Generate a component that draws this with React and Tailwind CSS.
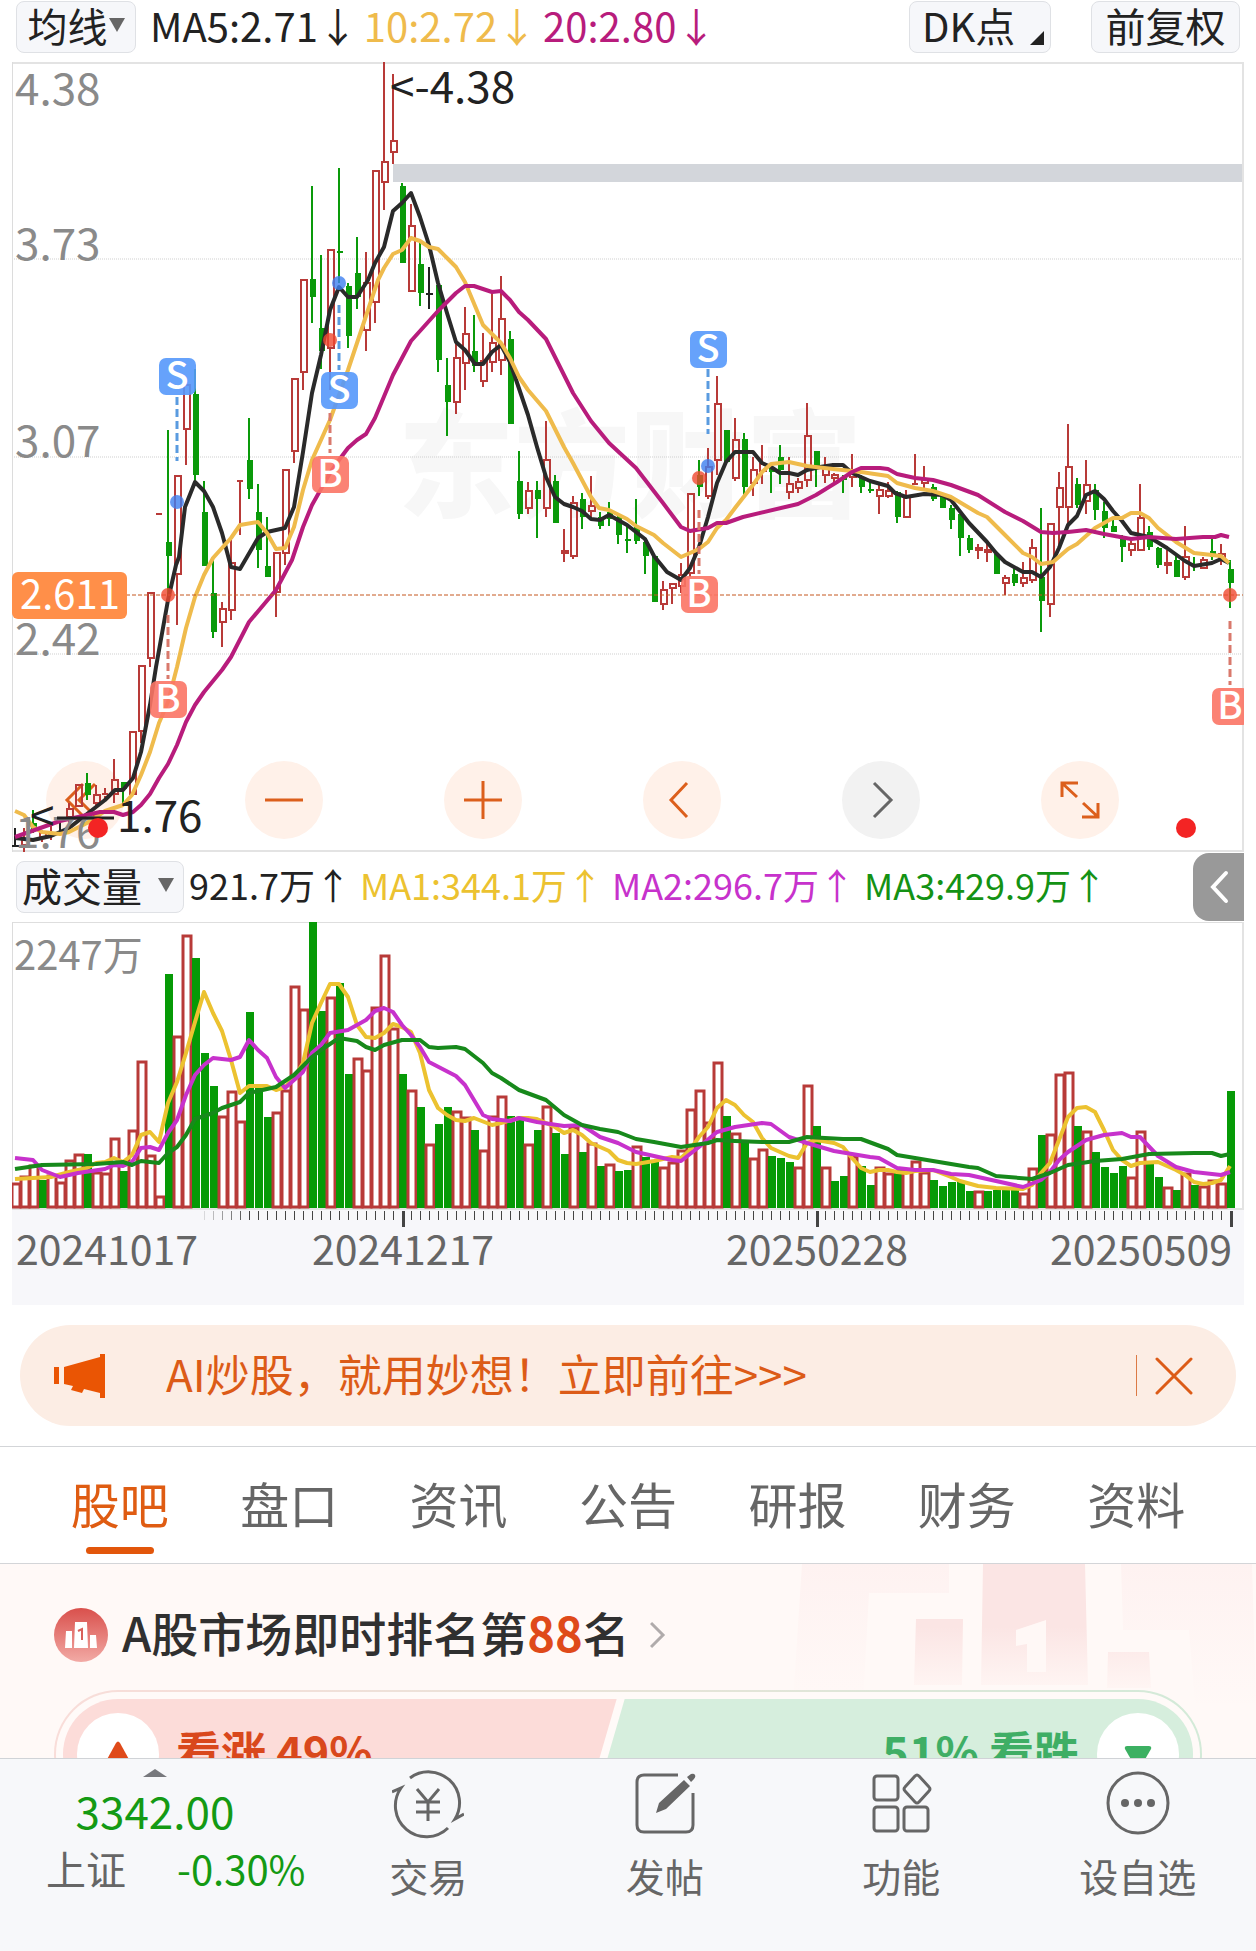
import React from "react";

const FONT = "font-['Noto_Sans_CJK_SC','Noto_Sans',sans-serif]";
const RED = "#b83a38";
const GREEN = "#0a9a0a";

const xAt = (i) => 15 + 9 * i;

// kind, high, body top, body bottom, low
const CANDLES = [
  ["k", 828, 845, 846, 846], ["r", 828, 838, 846, 852], ["g", 810, 823, 831, 833], ["r", 830, 832, 838, 842],
  ["r", 825, 832, 836, 840], ["k", 817, 831, 832, 833], ["r", 803, 808, 818, 823], ["r", 784, 784, 807, 807],
  ["g", 773, 783, 795, 800], ["r", 785, 794, 804, 806], ["r", 788, 793, 796, 800], ["r", 759, 779, 795, 803],
  ["g", 782, 782, 789, 805], ["r", 731, 731, 795, 795], ["r", 665, 665, 732, 743], ["r", 592, 592, 659, 667],
  ["r", 514, 513, 515, 514], ["g", 430, 542, 556, 595], ["r", 475, 475, 575, 625], ["r", 384, 384, 430, 465],
  ["g", 369, 394, 475, 481], ["g", 481, 512, 566, 566], ["g", 558, 593, 632, 638], ["r", 602, 608, 623, 647],
  ["r", 537, 562, 611, 620], ["r", 481, 480, 482, 535], ["g", 418, 460, 489, 499], ["g", 484, 512, 550, 568],
  ["g", 517, 566, 577, 577], ["r", 552, 552, 593, 617], ["r", 469, 469, 554, 565], ["r", 378, 378, 452, 463],
  ["r", 279, 279, 373, 390], ["g", 186, 279, 297, 323], ["g", 255, 328, 351, 369], ["r", 249, 249, 349, 390],
  ["g", 168, 251, 253, 283], ["g", 283, 286, 336, 348], ["g", 237, 273, 297, 309], ["r", 252, 282, 331, 351],
  ["r", 170, 170, 303, 323], ["r", 62, 161, 183, 210], ["r", 74, 140, 153, 164], ["g", 183, 186, 263, 263],
  ["r", 204, 225, 292, 292], ["g", 242, 264, 293, 306], ["k", 267, 293, 295, 309], ["g", 285, 285, 360, 372],
  ["g", 358, 385, 402, 436], ["r", 342, 357, 403, 414], ["r", 307, 333, 364, 390], ["g", 315, 351, 366, 372],
  ["r", 333, 360, 382, 387], ["r", 292, 342, 363, 372], ["r", 276, 318, 361, 375], ["g", 331, 339, 424, 424],
  ["g", 451, 481, 514, 519], ["r", 482, 490, 509, 514], ["g", 481, 490, 499, 538], ["r", 421, 459, 509, 517],
  ["g", 475, 481, 523, 523], ["r", 529, 550, 554, 562], ["r", 496, 502, 557, 559], ["g", 493, 499, 517, 529],
  ["r", 476, 505, 512, 517], ["g", 512, 517, 526, 529], ["g", 502, 512, 519, 526], ["g", 515, 517, 535, 544],
  ["g", 525, 539, 541, 553], ["g", 499, 527, 541, 544], ["g", 541, 542, 556, 574], ["g", 556, 556, 602, 602],
  ["r", 581, 589, 605, 610], ["r", 583, 583, 589, 604], ["r", 563, 574, 587, 593], ["r", 493, 493, 574, 577],
  ["g", 460, 475, 487, 496], ["r", 448, 466, 497, 499], ["r", 376, 403, 461, 475], ["g", 430, 430, 462, 462],
  ["r", 418, 439, 479, 481], ["g", 433, 439, 487, 496], ["r", 457, 469, 484, 496], ["r", 445, 463, 472, 484],
  ["g", 463, 467, 472, 493], ["g", 445, 457, 470, 484], ["r", 457, 483, 493, 499], ["r", 478, 481, 489, 493],
  ["r", 403, 435, 481, 487], ["g", 451, 451, 467, 487], ["r", 457, 467, 476, 483], ["r", 473, 474, 479, 483],
  ["g", 475, 477, 480, 493], ["r", 454, 473, 478, 487], ["g", 475, 477, 487, 493], ["g", 482, 489, 491, 493],
  ["r", 483, 489, 497, 514], ["r", 482, 490, 497, 498], ["g", 491, 492, 517, 523], ["r", 490, 495, 518, 518],
  ["r", 454, 483, 485, 485], ["r", 466, 479, 484, 488], ["g", 484, 487, 499, 501], ["g", 493, 494, 508, 508],
  ["g", 505, 508, 520, 529], ["g", 514, 514, 538, 556], ["g", 535, 538, 550, 553], ["r", 544, 547, 551, 559],
  ["r", 542, 549, 553, 562], ["g", 554, 554, 574, 574], ["r", 575, 577, 584, 595], ["g", 568, 574, 583, 586],
  ["r", 562, 577, 584, 587], ["r", 539, 547, 581, 583], ["g", 508, 577, 601, 632], ["r", 523, 523, 605, 617],
  ["r", 472, 487, 508, 547], ["r", 424, 466, 508, 523], ["g", 478, 484, 505, 508], ["r", 460, 484, 502, 514],
  ["g", 484, 490, 510, 520], ["g", 502, 511, 528, 538], ["g", 518, 526, 532, 532], ["g", 535, 536, 547, 562],
  ["r", 541, 543, 551, 556], ["r", 484, 517, 551, 551], ["g", 526, 532, 547, 550], ["g", 547, 548, 565, 568],
  ["r", 550, 562, 566, 574], ["g", 553, 560, 577, 577], ["r", 526, 556, 578, 580], ["g", 557, 565, 567, 571],
  ["r", 557, 559, 569, 569], ["g", 539, 551, 557, 560], ["r", 544, 553, 558, 565], ["g", 560, 569, 583, 608],
];

const MA5 =
  "15,838 33,840 51,836 69,828 87,814 105,800 115,790 123,790 133,778 141,752 150,705 156,667 168,600 176,565 179,557 185,507 195,482 204,491 213,507 222,533 231,567 240,569 258,538 267,532 285,528 294,507 303,452 312,393 321,355 330,310 339,287 348,297 357,297 368,280 375,263 384,247 393,211 402,203 411,193 420,217 429,245 438,283 447,313 456,342 465,350 475,364 483,364 492,352 501,345 510,362 528,415 537,447 546,477 555,497 564,504 573,507 582,511 591,519 600,520 609,515 627,525 645,539 654,556 667,572 681,580 690,568 699,547 708,517 717,483 726,462 735,452 753,452 762,463 771,467 780,473 789,473 798,475 807,470 820,467 833,465 843,465 852,473 870,481 888,486 895,493 906,497 924,494 942,495 951,500 969,523 987,542 996,553 1005,562 1023,572 1032,572 1041,577 1050,567 1059,548 1068,525 1077,516 1086,495 1095,491 1104,499 1113,511 1122,521 1131,533 1149,537 1167,548 1185,561 1194,566 1212,563 1221,559 1229,563";
const MA10 =
  "15,811 24,815 33,827 42,832 60,834 69,832 87,823 105,811 123,805 132,795 141,775 150,752 159,723 168,702 177,667 186,628 195,597 204,575 213,558 231,538 240,525 258,522 267,533 276,549 285,548 294,527 303,490 312,460 330,420 339,395 348,370 357,343 368,310 378,280 384,268 393,254 402,250 411,238 420,241 429,247 438,249 447,258 456,267 465,282 483,325 501,343 510,358 519,377 528,390 546,411 564,447 573,463 591,497 599,508 609,510 627,519 636,526 654,535 663,543 681,557 699,549 708,542 717,528 726,520 735,508 753,485 762,472 771,464 789,462 807,466 833,469 852,471 861,472 888,476 897,483 915,488 933,491 951,497 978,513 987,517 1005,535 1023,553 1032,557 1041,564 1053,562 1068,549 1077,544 1095,528 1113,518 1122,518 1131,513 1140,513 1149,518 1158,528 1176,542 1194,553 1221,556 1229,563";
const MA20 =
  "15,837 60,821 78,817 100,812 114,812 123,815 133,812 141,805 150,794 159,778 168,764 177,745 186,722 195,705 204,692 222,670 231,657 249,622 276,590 292,560 303,527 312,505 330,473 339,460 348,448 357,440 366,434 375,418 393,375 411,341 438,311 456,293 465,286 474,286 492,292 501,291 510,300 519,312 528,320 546,339 564,375 573,393 591,421 609,443 636,468 663,503 681,527 690,531 708,528 717,523 726,523 743,517 798,504 816,495 837,482 852,472 861,468 880,468 888,469 897,474 915,478 933,480 951,485 978,495 1005,512 1023,521 1041,532 1053,533 1068,532 1086,530 1104,534 1131,539 1149,537 1176,539 1203,537 1215,537 1221,535 1229,537";

// kind, height above the baseline
const VOLUME =
  "r25 r32 r43 g28 r33 r26 r48 r54 g54 r36 r35 r70 g37 r78 r147 r53 r12 g234 r172 r273 g250 g155 g122 r92 r117 r87 g196 g121 g91 r96 r118 r222 r199 g286 g197 r211 g225 g134 r150 r138 r201 r253 r180 g134 r118 g101 r64 g84 g101 r97 r91 g78 r58 r92 r112 g92 g90 r64 g78 r102 g75 g54 r81 g56 r65 g42 r44 g37 g38 r62 g51 g46 r41 r46 r58 r99 r118 r86 r146 g92 r75 g68 r50 r59 g52 g50 g46 r41 r123 g82 r41 g27 g32 r52 g42 g23 r41 r35 g38 r39 r47 r36 g28 g22 g26 g27 g17 r17 g17 g18 g20 g19 r15 r40 g73 r74 r134 r136 g82 r77 g56 g41 g35 g42 r31 r77 g44 g31 r21 g18 r35 g23 r22 r28 r25 g117".split(" ");

const VMA1 = [[0,1179],[2,1178],[4,1177],[6,1172],[8,1168],[9,1163],[10,1162],[11,1158],[12,1162],[13,1155],[14,1135],[15,1132],[16,1142],[17,1103],[18,1082],[19,1053],[20,1022],[21,992],[22,1013],[23,1031],[24,1060],[25,1093],[26,1086],[28,1086],[29,1090],[30,1087],[31,1078],[32,1063],[33,1023],[34,1003],[35,984],[36,984],[37,997],[38,1025],[39,1037],[40,1038],[41,1033],[42,1024],[43,1027],[44,1032],[45,1053],[46,1090],[47,1108],[48,1115],[49,1120],[50,1121],[51,1118],[53,1125],[54,1123],[56,1118],[57,1118],[58,1119],[59,1123],[60,1127],[61,1133],[62,1130],[63,1135],[64,1143],[66,1151],[67,1160],[68,1163],[69,1164],[71,1161],[73,1157],[74,1158],[75,1150],[76,1137],[77,1127],[78,1108],[79,1100],[80,1105],[81,1115],[82,1122],[83,1138],[84,1148],[86,1156],[87,1158],[88,1143],[89,1140],[91,1143],[92,1147],[93,1158],[94,1168],[95,1172],[96,1170],[97,1170],[98,1172],[99,1173],[100,1171],[102,1170],[104,1177],[105,1181],[107,1186],[109,1188],[112,1189],[113,1185],[114,1173],[115,1163],[116,1140],[117,1117],[118,1108],[119,1107],[120,1112],[121,1130],[122,1150],[123,1160],[124,1166],[125,1163],[127,1162],[129,1170],[130,1175],[131,1182],[132,1184],[133,1183],[134,1180],[135,1166]];
const VMA2 = [[0,1158],[2,1160],[3,1170],[5,1177],[7,1173],[10,1169],[11,1165],[12,1166],[13,1162],[14,1148],[15,1147],[16,1150],[17,1133],[18,1120],[19,1095],[20,1075],[21,1065],[22,1058],[24,1060],[25,1057],[26,1040],[27,1050],[28,1058],[29,1077],[30,1088],[31,1080],[32,1072],[33,1053],[34,1045],[35,1033],[37,1030],[39,1020],[40,1011],[41,1008],[42,1012],[43,1025],[44,1035],[45,1047],[46,1062],[49,1076],[50,1085],[52,1115],[53,1119],[55,1121],[56,1118],[58,1122],[61,1126],[63,1125],[65,1137],[67,1143],[69,1152],[70,1154],[71,1156],[73,1160],[74,1161],[76,1147],[78,1132],[80,1127],[83,1123],[84,1124],[86,1137],[88,1143],[91,1151],[93,1154],[95,1157],[96,1158],[98,1168],[100,1170],[102,1170],[104,1174],[106,1175],[112,1187],[114,1180],[115,1172],[116,1160],[117,1152],[119,1140],[121,1135],[123,1133],[124,1137],[125,1137],[127,1156],[129,1167],[131,1172],[134,1175],[135,1172]];
const VMA3 = [[0,1169],[3,1165],[9,1164],[12,1162],[13,1165],[14,1161],[16,1163],[17,1153],[18,1147],[19,1135],[20,1119],[22,1113],[23,1108],[25,1102],[26,1093],[29,1087],[31,1075],[33,1057],[34,1050],[36,1038],[38,1041],[39,1047],[40,1050],[41,1045],[43,1040],[45,1040],[46,1047],[47,1048],[49,1047],[50,1049],[52,1063],[53,1073],[54,1078],[56,1090],[59,1100],[61,1115],[63,1125],[65,1129],[67,1132],[69,1139],[71,1142],[74,1147],[77,1143],[78,1140],[80,1141],[83,1142],[86,1142],[88,1137],[92,1139],[94,1139],[97,1149],[98,1155],[102,1161],[106,1167],[107,1168],[109,1176],[113,1179],[115,1173],[117,1165],[120,1161],[123,1159],[126,1154],[131,1153],[133,1153],[134,1156],[135,1154]];

const toPoints = (s) => s.map(([i, y]) => `${xAt(i)},${y}`).join(" ");

// letter, x, badge centre y, dot y, dash start, dash end
const MARKERS = [
  ["S", 177, 376, 502, 397, 461],
  ["B", 168, 699, 595, 615, 679],
  ["B", 330, 474, 340, 413, 453],
  ["S", 339, 390, 283, 305, 370],
  ["B", 699, 594, 478, 510, 574],
  ["S", 708, 349, 466, 369, 434],
  ["B", 1230, 706, 595, 621, 685],
];

function Candle({ i, kind, high, top, bottom, low }) {
  const x = xAt(i);
  if (kind === "g")
    return (
      <g fill={GREEN}>
        <rect x={x - 1} y={high} width="2" height={low - high} />
        <rect x={x - 2} y={top} width="6" height={bottom - top} />
      </g>
    );
  if (kind === "k")
    return (
      <g fill="#222">
        <rect x={x - 1} y={high} width="2" height={low - high} />
        <rect x={x - 3} y={top} width="7" height="2" />
      </g>
    );
  const tall = bottom - top > 3;
  return (
    <g>
      <rect x={x - 1} y={high} width="2" height={Math.max(top - high, 0)} fill={RED} />
      <rect x={x - 1} y={bottom} width="2" height={Math.max(low - bottom, 0)} fill={RED} />
      {tall ? (
        <rect x={x - 2} y={top + 1} width="6" height={bottom - top - 2} fill="none" stroke={RED} strokeWidth="2" />
      ) : (
        <rect x={x - 3} y={top} width="6" height="2" fill={RED} />
      )}
    </g>
  );
}

function PriceChart() {
  return (
    <svg viewBox="12 62 1232 790" className="pointer-events-none relative block h-auto w-full" role="img" aria-label="日K线">
      <text x="398" y="508" fontSize="116" fontWeight="900" fill="#f7f7f7">东方财富</text>
      {[259, 457, 654].map((y) => (
        <line key={y} x1="12" x2="1243" y1={y} y2={y} stroke="#cfcfcf" strokeDasharray="1 1" />
      ))}
      <rect x="393" y="164" width="850" height="18" fill="#d3d6db" />
      <line x1="12" x2="1243" y1="63" y2="63" stroke="#e3e3e3" strokeWidth="2" />
      <line x1="12" x2="1243" y1="851" y2="851" stroke="#e3e3e3" strokeWidth="2" />
      <line x1="12.5" x2="12.5" y1="62" y2="852" stroke="#dcdcdc" />
      <line x1="1243" x2="1243" y1="62" y2="852" stroke="#e3e3e3" strokeWidth="2" />
      {CANDLES.map(([kind, high, top, bottom, low], i) => (
        <Candle key={i} i={i} kind={kind} high={high} top={top} bottom={bottom} low={low} />
      ))}
      <g fill="none" strokeWidth="4" strokeLinejoin="round">
        <polyline points={MA5} stroke="#2a2a2a" />
        <polyline points={MA10} stroke="#efbb4c" />
        <polyline points={MA20} stroke="#b81c7c" />
      </g>
      <line x1="12" x2="1243" y1="595" y2="595" stroke="#c4561f" strokeDasharray="4 2" />
      <g fontSize="44" fill="#8a8a8a">
        <text x="15" y="105">4.38</text>
        <text x="15" y="260">3.73</text>
        <text x="15" y="457">3.07</text>
        <text x="15" y="655">2.42</text>
        <text x="15" y="848">1.76</text>
      </g>
      <g fontSize="44" fill="#222">
        <text x="390" y="103">&lt;-4.38</text>
        <text x="30" y="832">&lt;</text>
        <text x="117" y="832">1.76</text>
      </g>
      <line x1="57" x2="114" y1="818" y2="818" stroke="#222" strokeWidth="3" />
      <rect x="12" y="572" width="115" height="47" rx="6" fill="#ff8f49" />
      <text x="20" y="609" fontSize="40" fill="#fff">2.611</text>
      {MARKERS.map(([letter, x, y, dot, from, to]) => {
        const buy = letter === "B";
        return (
          <g key={`${letter}${x}`}>
            <line x1={x} x2={x} y1={from} y2={to} stroke={buy ? "#d9796c" : "#5a9be0"} strokeWidth="3" strokeDasharray="8 4" />
            <circle cx={x} cy={dot} r="7" fill={buy ? "#f0492f" : "#3d7ff0"} fillOpacity="0.8" />
            <rect x={x - 18} y={y - 18} width="37" height="37" rx="7" fill={buy ? "#fb7465" : "#5598fb"} fillOpacity="0.9" />
            <text x={x} y={y + 13} textAnchor="middle" fontSize="38" fontWeight="500" fill="#fff">{letter}</text>
          </g>
        );
      })}
      <circle cx="98" cy="828" r="10" fill="#f32424" />
      <circle cx="1186" cy="828" r="10" fill="#f32424" />
    </svg>
  );
}

function VolumeChart() {
  const ticks = [];
  for (let i = 21; i < 136; i++) ticks.push(i);
  return (
    <svg viewBox="12 922 1232 383" className="block h-auto w-full" role="img" aria-label="成交量">
      <rect x="12" y="1210" width="1232" height="95" fill="#f7f7fa" />
      <line x1="12" x2="1243" y1="922.5" y2="922.5" stroke="#dedede" />
      <line x1="12.5" x2="12.5" y1="922" y2="1210" stroke="#dcdcdc" />
      <line x1="1243" x2="1243" y1="922" y2="1210" stroke="#e3e3e3" strokeWidth="2" />
      <line x1="12" x2="1243" y1="1209" y2="1209" stroke="#e3e3e3" strokeWidth="2" />
      <text x="14" y="970" fontSize="40" fill="#8a8a8a">2247万</text>
      {VOLUME.map((v, i) => {
        const h = Number(v.slice(1));
        const x = xAt(i);
        return v[0] === "g" ? (
          <rect key={i} x={x - 3} y={1208 - h} width="8" height={h} fill="#069a06" />
        ) : (
          <rect key={i} x={x - 3} y={1209 - h} width="8" height={h - 2} fill="#fff" stroke={RED} strokeWidth="3" />
        );
      })}
      <g fill="none" strokeWidth="4" strokeLinejoin="round">
        <polyline points={toPoints(VMA1)} stroke="#ecc230" />
        <polyline points={toPoints(VMA2)} stroke="#c732cc" />
        <polyline points={toPoints(VMA3)} stroke="#17891b" />
      </g>
      {ticks.map((i) => {
        const major = i === 43 || i === 89 || i === 135;
        return (
          <rect
            key={i}
            x={xAt(i)}
            y="1211"
            width={major ? 3 : 1}
            height={major ? 16 : 9}
            fill="#444"
            opacity={Math.min(1, (i - 20) / 6)}
          />
        );
      })}
      <g fontSize="41" fill="#666">
        <text x="16" y="1265">20241017</text>
        <text x="312" y="1265">20241217</text>
        <text x="726" y="1265">20250228</text>
        <text x="1232" y="1265" textAnchor="end">20250509</text>
      </g>
    </svg>
  );
}

const CONTROLS = [
  ["更早", "M34 20 18 36l16 16M46 20 30 36l16 16"],
  ["缩小", "M17 36h38"],
  ["放大", "M17 36h38M36 17v38"],
  ["左移", "M41 19 25 36l16 17"],
  ["右移", "M29 19 46 36 29 53"],
  ["全屏", "M18 33V19h16M19 20l14 13M54 39v14H38M53 52 39 39"],
];

function ChartControls() {
  return (
    <div className="absolute bottom-[13px] left-[34px] right-[125px] flex justify-between">
      {CONTROLS.map(([label, d]) => {
        const muted = label === "右移";
        return (
          <button
            key={label}
            aria-label={label}
            className={`flex h-[78px] w-[78px] items-center justify-center rounded-full ${
              muted ? "bg-[#f2f2f2] text-[#666]" : "bg-[#fff1e9] text-[#dc5f1c]"
            }`}
          >
            <svg viewBox="0 0 72 72" className="h-[72px] w-[72px]" fill="none" stroke="currentColor" strokeWidth="3">
              <path d={d} />
            </svg>
          </button>
        );
      })}
    </div>
  );
}

function Down({ className }) {
  return (
    <svg viewBox="0 0 16 16" className={className} fill="#666" aria-hidden="true">
      <path d="M0 1h16L8 15z" />
    </svg>
  );
}

const CHIP = "flex h-[52px] shrink-0 items-center rounded-lg border border-[#dfe1e5] bg-[#f6f7fa] pb-1 text-[40px] leading-[60px] text-[#222]";

function Insight() {
  return (
    <section className="relative h-[194px] overflow-hidden bg-[#fff9f7]">
      <svg viewBox="0 1564 1256 194" className="absolute inset-0 h-full w-full" aria-hidden="true">
        <defs>
          <linearGradient id="strong" gradientUnits="userSpaceOnUse" x1="0" y1="1564" x2="0" y2="1690">
            <stop offset="0.5" stopColor="#fbe5e4" />
            <stop offset="1" stopColor="#fff6f4" />
          </linearGradient>
          <linearGradient id="faint" gradientUnits="userSpaceOnUse" x1="0" y1="1564" x2="0" y2="1710">
            <stop offset="0" stopColor="#fef2f1" />
            <stop offset="1" stopColor="#fff9f7" />
          </linearGradient>
        </defs>
        <path d="M802 1564h147v29h-80l-6 110h-70z" fill="url(#faint)" />
        <path d="M1121 1564h131l4 140h-61l-6-74h-66z" fill="url(#faint)" />
        <path d="M916 1619h47l-1 66h-48zM983 1564h102l3 121H981zM1108 1652h41l2 36h-44z" fill="url(#strong)" />
        <path d="M1016 1630l30-10v52h-19v-28l-11 2z" fill="#fff8f6" />
      </svg>
      <a href="#rank" className="relative flex h-[142px] items-center pl-[54px] text-[47px] font-medium leading-[70px] text-[#303030]">
        <svg viewBox="0 0 54 54" className="h-[54px] w-[54px]" aria-hidden="true">
          <defs>
            <linearGradient id="medal" x1="0" y1="0" x2="0" y2="1">
              <stop offset="0" stopColor="#d9504c" />
              <stop offset="1" stopColor="#f2aaa5" />
            </linearGradient>
          </defs>
          <circle cx="27" cy="27" r="27" fill="url(#medal)" />
          <path d="M12 23h6v17h-7zM21 14h12l1 26H20zM36 27h6l1 13h-7z" fill="#fff" />
          <path d="M24 23l4-2v11" fill="none" stroke="#d9605a" strokeWidth="2" />
        </svg>
        <span className="ml-[14px] whitespace-nowrap pb-[6px]">
          A股市场即时排名第<b className="font-bold text-[#df4a1a]">88</b>名
        </span>
        <svg viewBox="0 0 16 28" className="ml-5 h-7 w-4" fill="none" stroke="#b0abab" strokeWidth="3" aria-hidden="true">
          <path d="M1 2l12 12L1 26" />
        </svg>
      </a>
      <div className="absolute left-[54px] right-[54px] top-[126px] h-[128px] rounded-full bg-linear-to-r from-[#f9ddd9] to-[#d3ead8] p-[2px]">
        <div className="h-full rounded-full bg-[#fffaf8] p-[7px]">
          <div className="flex h-full overflow-hidden rounded-full">
            <button className="flex w-[49%] items-center bg-[#fcdcd9] pl-[14px] text-[45px] font-bold leading-[68px] text-[#d9481c] [clip-path:polygon(0_0,100%_0,calc(100%_-_32px)_100%,0_100%)]">
              <span className="flex h-[82px] w-[82px] items-center justify-center rounded-full bg-white">
                <svg viewBox="0 0 28 26" className="h-[26px] w-7" aria-hidden="true">
                  <path d="M12 2q2-3 4 0l11 20q1 3-2 3H3q-3 0-2-3z" fill="#df4a1a" />
                </svg>
              </span>
              <span className="ml-[17px] pb-[6px]">看涨 49%</span>
            </button>
            <button className="-ml-6 flex flex-1 items-center justify-end bg-[#d6eedd] pr-[14px] text-[45px] font-bold leading-[68px] text-[#3fae65] [clip-path:polygon(32px_0,100%_0,100%_100%,0_100%)]">
              <span className="mr-[18px] pb-[6px]">51% 看跌</span>
              <span className="flex h-[82px] w-[82px] items-center justify-center rounded-full bg-white">
                <svg viewBox="0 0 28 26" className="mt-2 h-[26px] w-7" aria-hidden="true">
                  <path d="M3 1h22q3 0 2 3L16 23q-2 3-4 0L1 4Q0 1 3 1z" fill="#3cb062" />
                </svg>
              </span>
            </button>
          </div>
        </div>
      </div>
    </section>
  );
}

const ICONS = {
  交易: (
    <>
      <path d="M18 11A31 31 0 0 1 63 52l9-5M56 61A31 31 0 0 1 9 21L0 25" />
      <path d="M25 22l11 13 11-13M24 35h24M24 45h24M36 35v19" />
    </>
  ),
  发帖: (
    <>
      <path d="M49 8H15q-7 0-7 7v43q0 7 7 7h42q7 0 7-7V26" />
      <path d="M27 46l3-10 25-23 6 6-24 23zM58 10l4-3q3-1 4 1t-1 4l-3 3z" fill="currentColor" stroke="none" />
    </>
  ),
  功能: (
    <>
      <rect x="9" y="9" width="24" height="24" rx="3" />
      <rect x="9" y="40" width="24" height="24" rx="3" />
      <rect x="39" y="40" width="24" height="24" rx="3" />
      <path d="M50 9q2-2 4 0l10 11q2 2 0 4L54 35q-2 2-4 0L40 24q-2-2 0-4z" />
    </>
  ),
  设自选: (
    <>
      <circle cx="36" cy="36" r="30" />
      <g fill="currentColor" stroke="none">
        <circle cx="23" cy="36" r="4" />
        <circle cx="36" cy="36" r="4" />
        <circle cx="49" cy="36" r="4" />
      </g>
    </>
  ),
};

function BottomBar() {
  return (
    <nav className="flex h-[193px] border-t border-[#d0d3d7] bg-[#f7f8fa] text-[#666]">
      <button className="flex w-[310px] flex-col items-center pt-[10px]">
        <svg viewBox="0 0 24 8" className="h-2 w-6" fill="#77787c" aria-hidden="true">
          <path d="M0 8 12 0l12 8z" />
        </svg>
        <span className="text-[44px] leading-[66px] text-[#149a14]">3342.00</span>
        <span className="flex w-full gap-[51px] pl-[46px] text-[40px] leading-[50px]">
          <span>上证</span>
          <span className="text-[#149a14]">-0.30%</span>
        </span>
      </button>
      {Object.entries(ICONS).map(([label, icon]) => (
        <button key={label} className="flex flex-1 flex-col items-center pt-2">
          <svg viewBox="0 0 72 72" className="h-[72px] w-[72px]" fill="none" stroke="currentColor" strokeWidth="3" aria-hidden="true">
            {icon}
          </svg>
          <span className="mt-[7px] text-[39px] leading-[58px]">{label}</span>
        </button>
      ))}
    </nav>
  );
}

export default function App() {
  return (
    <div className={`${FONT} overflow-x-hidden bg-white`}>
      <main className="px-3">
        <header className="flex h-[62px] items-center whitespace-nowrap pb-2 pl-1 pr-1">
          <button className={`${CHIP} w-[120px] justify-center`}>
            均线
            <Down className="ml-px h-4 w-4" />
          </button>
          <div className="ml-[14px] flex gap-[6px] pb-[5px] text-[40px] leading-[48px]">
            <span className="text-[#222]">MA5:2.71↓</span>
            <span className="text-[#efbb4c]">10:2.72↓</span>
            <span className="text-[#b81c7c]">20:2.80↓</span>
          </div>
          <button className={`${CHIP} relative ml-auto w-[142px] pl-3`}>
            DK点
            <svg viewBox="0 0 14 14" className="absolute bottom-[7px] right-[6px] h-[14px] w-[14px]" fill="#222" aria-hidden="true">
              <path d="M14 0v14H0z" />
            </svg>
          </button>
          <button className={`${CHIP} ml-10 w-[149px] justify-center`}>前复权</button>
        </header>

        <section className="relative">
          <ChartControls />
          <PriceChart />
        </section>

        <div className="flex h-[70px] items-center whitespace-nowrap pl-1">
          <button className={`${CHIP} w-[168px] pl-[5px]`}>
            成交量
            <Down className="ml-4 h-4 w-4" />
          </button>
          <div className="ml-[5px] flex gap-[9px] pb-[6px] text-[36px] leading-[54px]">
            <span className="text-[#222]">921.7万↑</span>
            <span className="text-[#ecc230]">MA1:344.1万↑</span>
            <span className="text-[#c732cc]">MA2:296.7万↑</span>
            <span className="text-[#149214]">MA3:429.9万↑</span>
          </div>
          <button aria-label="收起" className="ml-auto flex h-[68px] w-[51px] items-center justify-center rounded-l-2xl bg-[#999] text-white">
            <svg viewBox="0 0 20 34" className="h-[34px] w-5" fill="none" stroke="currentColor" strokeWidth="4" strokeLinecap="round">
              <path d="M17 3 4 17l13 14" />
            </svg>
          </button>
        </div>
        <VolumeChart />
      </main>

      <aside className="mx-5 my-5 flex h-[101px] items-center rounded-full bg-[#fcede4] pl-[34px] pr-[43px] text-[#dc5b17]">
        <svg viewBox="0 0 51 44" className="h-[44px] w-[51px]" fill="#ea5504" aria-hidden="true">
          <path d="M0 13h5v17H0zM10 13 46 3V0h5v44h-5v-5l-16-4-2 4-11-3 2-4-9-2z" />
        </svg>
        <a href="#ai" className="ml-[61px] whitespace-nowrap pb-[6px] text-[44px] leading-[66px]">AI炒股，就用妙想！立即前往&gt;&gt;&gt;</a>
        <span className="ml-auto h-[41px] w-px bg-[#dc7a45]" />
        <button aria-label="关闭" className="ml-[18px]">
          <svg viewBox="0 0 38 38" className="h-[38px] w-[38px]" fill="none" stroke="currentColor" strokeWidth="3" strokeLinecap="round">
            <path d="M2 2l34 34M36 2 2 36" />
          </svg>
        </button>
      </aside>

      <div role="tablist" className="grid h-[118px] grid-cols-7 border-y border-[#d3d5d8] px-[35px] text-[49px] leading-[74px] text-[#666]">
        {["股吧", "盘口", "资讯", "公告", "研报", "财务", "资料"].map((t, i) => (
          <button key={t} role="tab" aria-selected={i === 0} className={`relative flex items-center justify-center pb-1 ${i === 0 ? "text-[#df5c12]" : ""}`}>
            {t}
            {i === 0 && <span className="absolute bottom-[9px] h-[7px] w-[68px] rounded-full bg-[#e2560b]" />}
          </button>
        ))}
      </div>

      <Insight />
      <BottomBar />
    </div>
  );
}
